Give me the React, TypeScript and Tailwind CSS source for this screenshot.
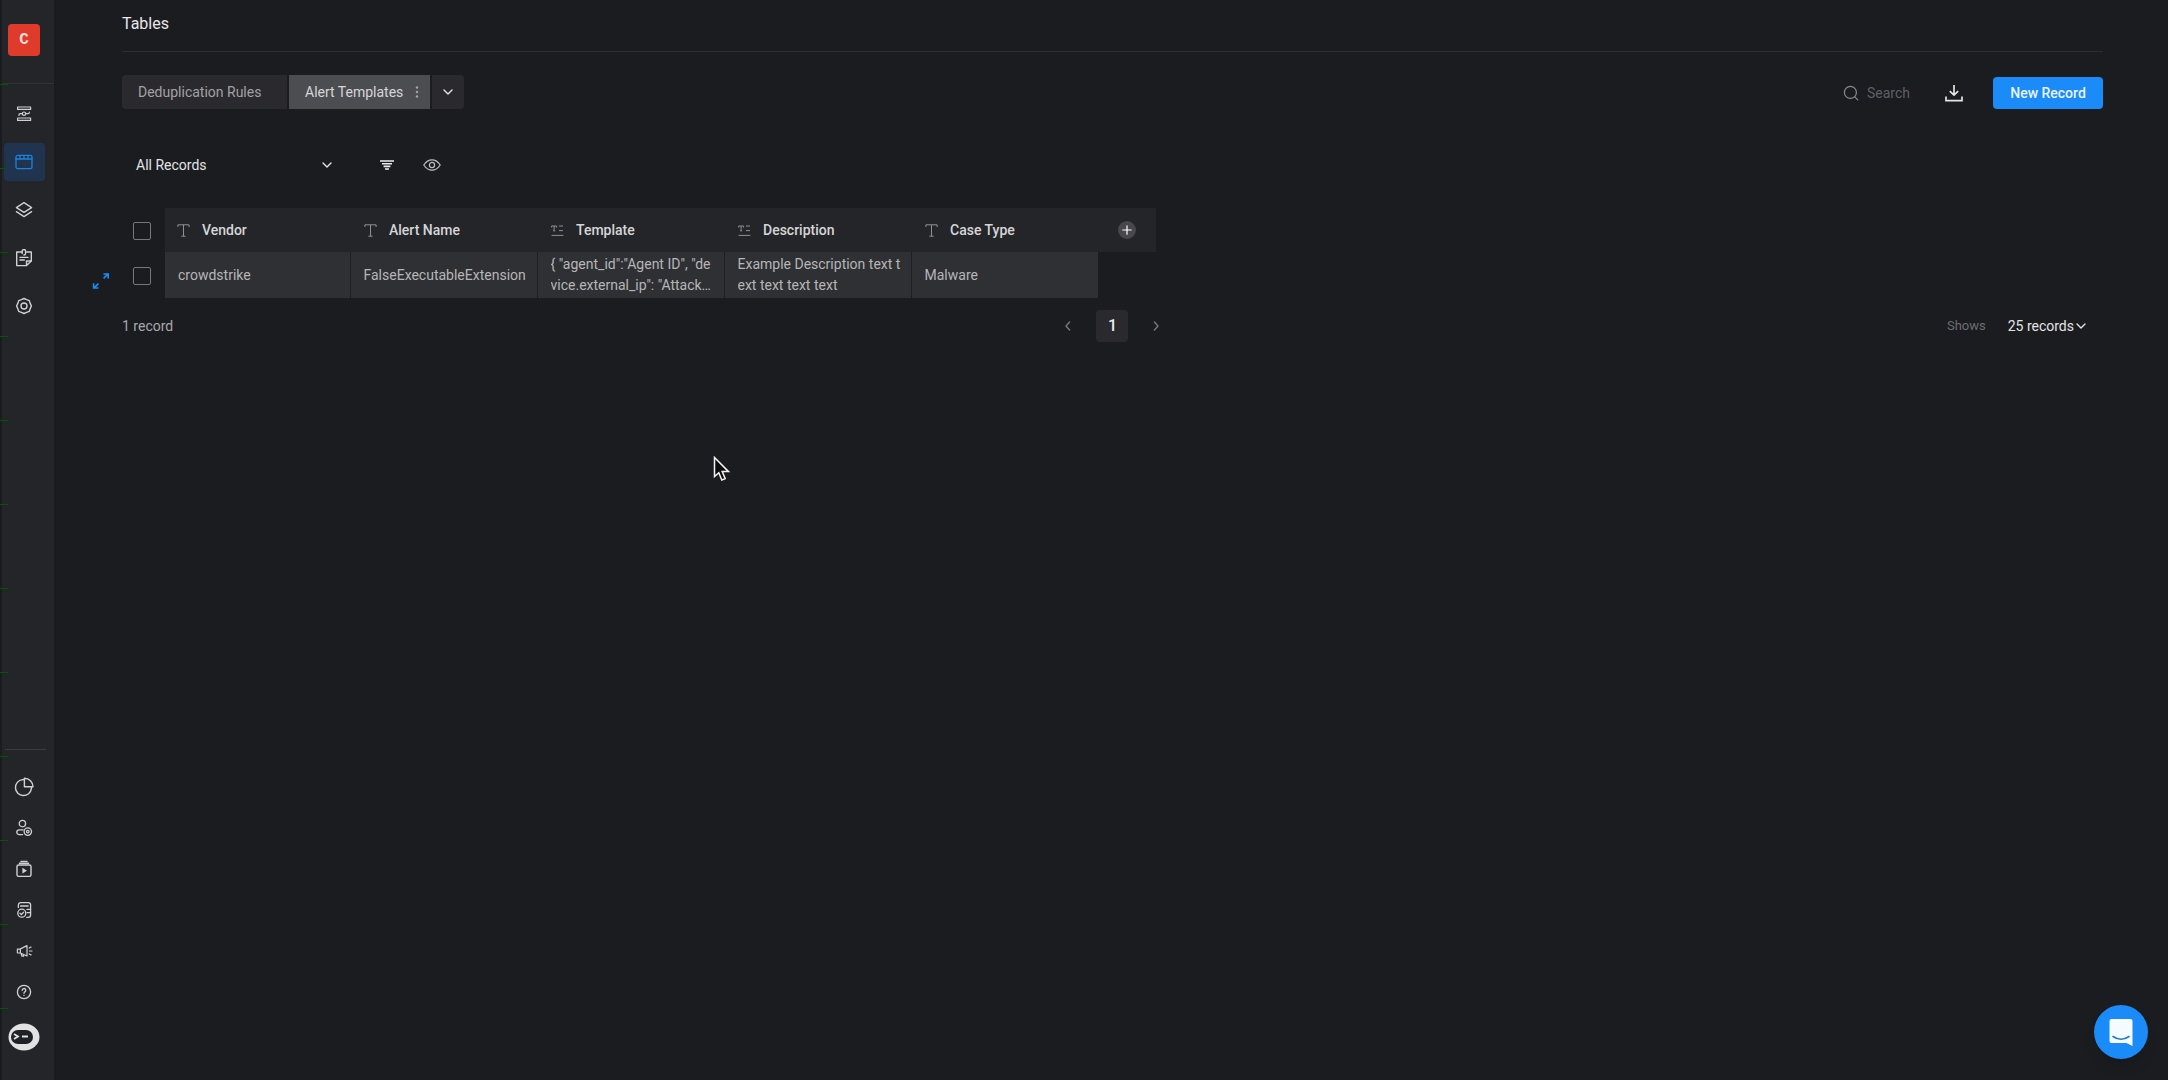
import type { ReactNode } from "react";

type IconProps = { size?: number; className?: string; children: ReactNode; box?: string; sw?: number };

function Icon({ size = 18, className = "", children, box = "0 0 18 18", sw = 1.3 }: IconProps) {
  return (
    <svg
      width={size}
      height={size}
      viewBox={box}
      fill="none"
      stroke="currentColor"
      strokeWidth={sw}
      strokeLinecap="round"
      strokeLinejoin="round"
      className={`shrink-0 ${className}`}
      aria-hidden="true"
    >
      {children}
    </svg>
  );
}

const FlowIcon = () => (
  <Icon sw={1.2}>
    <rect x="2.6" y="2" width="13" height="2.4" />
    <rect x="2.6" y="13" width="13" height="2.4" />
    <circle cx="9" cy="8.7" r="1.7" />
    <path d="M7.3 8.7H5.2q-1.2 0-1.2 1.2v.5M10.7 8.7h2.4q1.2 0 1.2-1.2V7" />
  </Icon>
);

const TablesIcon = () => (
  <Icon sw={1.3}>
    <rect x="1" y="2.4" width="16" height="13.2" rx="1.6" />
    <path d="M1 6h16M5 2.6V6M9 2.6V6M13 2.6V6" />
  </Icon>
);

const LayersIcon = () => (
  <Icon sw={1.3}>
    <path d="M9 1.6 16.6 6.6 9 11.4 1.4 6.6Z" />
    <path d="M1.4 10.6 9 15.6l7.6-5" />
  </Icon>
);

const NoteIcon = () => (
  <Icon sw={1.4}>
    <path d="M7 3H1.7v13.6h9.8l4.8-4.6V3h-4.6" />
    <path d="M11.5 16.4V12h4.6" />
    <path d="M7.2 4.6V2.2a1.7 1.7 0 0 1 3.4 0v2.4q0 1.4-1.7 1.4M5 8.4h8M5 11h4.4" />
  </Icon>
);

const GearIcon = () => (
  <Icon sw={1.4}>
    <path d="M6.4 2.7 9 1.5l2.6 1.2 2.7 1 .9 2.7L16.4 9l-1.2 2.6-.9 2.7-2.7 1L9 16.5l-2.6-1.2-2.7-1-.9-2.7L1.6 9l1.2-2.6.9-2.7Z" />
    <circle cx="9" cy="9" r="3" />
  </Icon>
);

const PieIcon = () => (
  <Icon size={20} box="0 0 20 20" sw={1.4}>
    <path d="M8.4 2.6a8 8 0 1 0 9 9" />
    <path d="M10.4 1.2v8.6h8.6a8.6 8.6 0 0 0-8.6-8.6Z" />
    <path d="M8.4 2.6q1-.2 2-.1M17.4 11.6q.2-1 .1-1.8" />
  </Icon>
);

const UserGearIcon = () => (
  <Icon sw={1.3}>
    <circle cx="7.4" cy="4.6" r="3.2" />
    <path d="M7.6 15.6H4.2a2.2 2.2 0 0 1 0-4.8h4" />
    <circle cx="12.8" cy="12.6" r="3.7" />
    <circle cx="12.8" cy="12.6" r="1.3" />
  </Icon>
);

const PlayBoxIcon = () => (
  <Icon sw={1.4}>
    <rect x="2" y="5" width="14" height="11.4" rx="1.6" />
    <path d="M4.4 3.2h9.2M6 1.4h6" />
    <path d="M7.4 7.8v5.8l4.6-2.9Z" fill="currentColor" stroke="none" />
  </Icon>
);

const DatabaseCheckIcon = () => (
  <Icon sw={1.3}>
    <path d="M3.4 6.4V4a2.4 2.4 0 0 1 2.4-2.4h7.4A2.4 2.4 0 0 1 15.6 4v10a2.4 2.4 0 0 1-2.4 2.4H11.8" />
    <path d="M5.6 5h7.6M12 8.4h3M12 11.6h3" />
    <circle cx="6.8" cy="12.2" r="4" />
    <path d="m5 12.2 1.4 1.3 2.3-2.4" />
  </Icon>
);

const MegaphoneIcon = () => (
  <Icon sw={1.2}>
    <path d="M2.4 7.2v3.6l3 .2 6.6 3V3.6L5.4 6.9ZM5.4 7v4M6 11.4l.8 2.8h1.8l-.6-2" />
    <path d="M14.4 9h2.6M14.2 6l1.8-.9M14.2 12l1.8.9" />
  </Icon>
);

const HelpIcon = () => (
  <Icon size={18} sw={1.3}>
    <circle cx="9" cy="9" r="6.6" />
    <path d="M7.2 7.4a1.8 1.8 0 1 1 2.6 1.5q-.8.5-.8 1.4" />
    <path d="M9 12.3v.1" />
  </Icon>
);

const ChevronDown = ({ className = "" }: { className?: string }) => (
  <Icon size={12} box="0 0 12 12" sw={1.4} className={className}>
    <path d="m2 4 4 4 4-4" />
  </Icon>
);

const TextTypeIcon = () => (
  <svg width="13" height="13" viewBox="0 0 13 13" fill="none" stroke="#8f9093" className="shrink-0" aria-hidden="true">
    <path d="M.9 3V.8h11.2V3M6.5.8v11.4M4.4 12.2h4.2" />
  </svg>
);

const LongTextIcon = () => (
  <svg width="13" height="13" viewBox="0 0 13 13" fill="none" stroke="#8f9093" className="shrink-0" aria-hidden="true">
    <path d="M.6 3.5V2h5v1.5M3.1 2v4.6M2 6.8h2.2M8 2h4M8 6.6h4M.6 11.4h11.8" />
  </svg>
);

const mainNav = [
  { label: "Workflows", icon: <FlowIcon /> },
  { label: "Tables", icon: <TablesIcon />, active: true },
  { label: "Integrations", icon: <LayersIcon /> },
  { label: "Cases", icon: <NoteIcon /> },
  { label: "Settings", icon: <GearIcon /> },
];

const bottomNav = [
  { label: "Reports", icon: <PieIcon /> },
  { label: "Users", icon: <UserGearIcon /> },
  { label: "Runs", icon: <PlayBoxIcon /> },
  { label: "Audit", icon: <DatabaseCheckIcon /> },
  { label: "Announcements", icon: <MegaphoneIcon /> },
  { label: "Help", icon: <HelpIcon /> },
];

const greenTicks = [84, 168, 252, 336, 420, 504, 588, 672, 756, 840, 924, 1008];

function Sidebar() {
  return (
    <aside className="relative flex w-[54px] shrink-0 flex-col border-l-2 border-[#1b1c20] bg-[#242529] text-[#d0d1d3]">
      <div className="h-[84px] border-b border-[#313236] pt-6 pl-1.5">
        <button
          type="button"
          aria-label="Workspace C"
          className="flex size-8 items-center justify-center rounded-sm bg-[#df3a2a] font-mono text-base font-bold text-[#f3dcd8]"
        >
          C
        </button>
      </div>
      <nav aria-label="Main" className="flex flex-col gap-2.5 pt-[11px] pl-0.5">
        {mainNav.map((item) => (
          <button
            key={item.label}
            type="button"
            aria-label={item.label}
            className={
              item.active
                ? "flex h-[38px] w-[41px] items-center justify-center rounded bg-[#20344f] pr-px text-[#1c80dc]"
                : "flex h-[38px] w-[41px] items-center justify-center rounded pr-px"
            }
          >
            {item.icon}
          </button>
        ))}
      </nav>
      <div className="mt-auto mr-2 ml-[3px] border-t border-[#3a3b3f]" />
      <nav aria-label="Secondary" className="flex flex-col pt-4 pl-0.5">
        {bottomNav.map((item) => (
          <button key={item.label} type="button" aria-label={item.label} className="flex h-[41px] w-10 items-center justify-center">
            {item.icon}
          </button>
        ))}
      </nav>
      <button type="button" aria-label="Account" className="mt-[11px] mb-[29px] ml-1.5 w-8">
        <svg width="32" height="28" viewBox="0 0 32 28" aria-hidden="true">
          <ellipse cx="16" cy="14" rx="15.5" ry="13.5" fill="#e2e2e4" />
          <rect x="3" y="7" width="22" height="14" rx="7" fill="#202125" />
          <path d="m6 11 4 2.5-4 2.5M14 13.5h6" fill="none" stroke="#e2e2e4" strokeWidth="1.8" />
        </svg>
      </button>
      <svg className="pointer-events-none absolute top-0 -left-0.5" width="8" height="1080" aria-hidden="true">
        {greenTicks.map((y) => (
          <rect key={y} x="0" y={y} width="8" height="1" fill="#075407" />
        ))}
      </svg>
    </aside>
  );
}

const columns = [
  { name: "Vendor", long: false },
  { name: "Alert Name", long: false },
  { name: "Template", long: true },
  { name: "Description", long: true },
  { name: "Case Type", long: false },
];

const row = [
  "crowdstrike",
  "FalseExecutableExtension",
  '{ "agent_id":"Agent ID", "device.external_ip": "Attack…',
  "Example Description text text text text text",
  "Malware",
];

const checkboxClass = "block size-[18px] appearance-none rounded-xs border border-[#77787b] checked:bg-[#1a8bf8]";

function RecordsTable() {
  return (
    <table className="-ml-8 table-fixed border-collapse text-left text-sm">
      <colgroup>
        <col className="w-8" />
        <col className="w-[43px]" />
        {columns.map((c, i) => (
          <col key={c.name} className={i === 0 ? "w-[185px]" : "w-[187px]"} />
        ))}
        <col className="w-[58px]" />
      </colgroup>
      <thead>
        <tr className="h-11">
          <td />
          <td className="pt-0.5 pl-[11px]">
            <input type="checkbox" aria-label="Select all records" className={checkboxClass} />
          </td>
          {columns.map((c, i) => (
            <th
              key={c.name}
              scope="col"
              className={i === 0 ? "bg-[#242528] pl-3 font-medium text-[#d6d6d8]" : "bg-[#242528] pl-3.5 font-medium text-[#d6d6d8]"}
            >
              <span className="flex items-center gap-3">
                {c.long ? <LongTextIcon /> : <TextTypeIcon />}
                {c.name}
              </span>
            </th>
          ))}
          <td className="bg-[#242528] pl-5">
            <button type="button" aria-label="Add column" className="flex size-[18px] items-center justify-center rounded-full bg-[#48484c] text-white">
              <Icon size={10} box="0 0 10 10" sw={1.2}>
                <path d="M5 .8v8.4M.8 5h8.4" />
              </Icon>
            </button>
          </td>
        </tr>
      </thead>
      <tbody>
        <tr className="h-[46px]">
          <td className="pt-3 pl-0.5">
            <button type="button" aria-label="Expand record" className="block text-[#1a8bf8]">
              <Icon size={18} sw={1.6}>
                <path d="m11.6 6.4 4-4M11.4 2h4.8v4.6M6.4 11.6l-4 4M1.6 11.2V16h4.8" strokeLinecap="butt" strokeLinejoin="miter" />
              </Icon>
            </button>
          </td>
          <td className="pt-0.5 pl-[11px]">
            <input type="checkbox" aria-label="Select crowdstrike record" className={checkboxClass} />
          </td>
          {row.map((value) => (
            <td key={value} className="border-r border-[#1e1f22] bg-[#2f3033] pr-2 pl-[13px] text-[#b6b6b8] last:border-r-0">
              <span className="line-clamp-2 leading-[21px] break-all">{value}</span>
            </td>
          ))}
        </tr>
      </tbody>
    </table>
  );
}

export default function App() {
  return (
    <div className="flex min-h-screen bg-[#1b1c20] font-[Roboto,sans-serif] text-sm text-[#e4e4e6]">
      <Sidebar />
      <main className="min-w-0 flex-1 pr-[65px] pl-[68px]">
        <header className="flex h-[52px] items-start border-b border-[#2d2e32] pt-3">
          <h1 className="text-base leading-6 font-normal text-[#e8e8ea]">Tables</h1>
        </header>

        <div className="mt-[23px] flex items-center justify-between">
          <div className="flex h-[34px] gap-0.5">
            <button type="button" className="w-[165px] rounded-l bg-[#2a292d] pl-4 text-left text-[#a2a2a5]">
              Deduplication Rules
            </button>
            <div className="flex items-center bg-[#4c4d51] pl-4">
              <button type="button" className="text-[#d6d6d8]">Alert Templates</button>
              <button type="button" aria-label="Table options" className="flex h-full w-[27px] items-center justify-center text-[#a2a2a5]">
                <svg width="4" height="12" fill="currentColor" aria-hidden="true">
                  <circle cx="2" cy="1.5" r="1.2" />
                  <circle cx="2" cy="6" r="1.2" />
                  <circle cx="2" cy="10.5" r="1.2" />
                </svg>
              </button>
            </div>
            <button type="button" aria-label="More tables" className="flex w-8 items-center justify-center rounded-r bg-[#2a292d] text-[#e4e4e6]">
              <ChevronDown />
            </button>
          </div>

          <div className="flex items-center pt-0.5">
            <label className="flex items-center gap-2 text-[#88898c]">
              <Icon size={16} box="0 0 16 16" sw={1.2}>
                <circle cx="7.4" cy="7.4" r="6" />
                <path d="m11.8 11.8 3 3" />
              </Icon>
              <input type="text" placeholder="Search" aria-label="Search" className="w-[78px] bg-transparent outline-none placeholder:text-[#5f6063]" />
            </label>
            <button type="button" aria-label="Download" className="mr-[30px]">
              <Icon size={18} sw={1.7}>
                <path d="M9 1v10M4.8 7.2 9 11.2l4.2-4M1 12.4v4.2h16v-4.2" strokeLinecap="butt" strokeLinejoin="miter" />
              </Icon>
            </button>
            <button type="button" className="h-8 w-[110px] rounded bg-[#1a8bf8] font-medium text-[#ecf5ff]">
              New Record
            </button>
          </div>
        </div>

        <div className="mt-10 flex h-8 items-center">
          <button type="button" className="flex w-[211px] items-center justify-between pl-3.5">
            <span>All Records</span>
            <ChevronDown />
          </button>
          <button type="button" aria-label="Filter records" className="ml-[47px] text-[#ececee]">
            <svg width="14" height="10" viewBox="0 0 14 10" fill="none" stroke="currentColor" strokeWidth="1.6" aria-hidden="true">
              <path d="M0 1h14M2 3.7h10M3.6 6.4h6.8M5 9h4" />
            </svg>
          </button>
          <button type="button" aria-label="Visible fields" className="ml-[29px] text-[#bebec1]">
            <svg width="18" height="12" viewBox="0 0 18 12" fill="none" stroke="currentColor" strokeWidth="1.2" aria-hidden="true">
              <path d="M.8 6Q4.2.8 9 .8T17.2 6Q13.8 11.2 9 11.2T.8 6Z" />
              <circle cx="9" cy="6" r="2.6" />
            </svg>
          </button>
        </div>

        <section aria-label="Records" className="mt-[27px]">
          <RecordsTable />
          <footer className="mt-3 grid grid-cols-3 items-center">
            <span className="text-[#a9a9ac]">1 record</span>
            <div className="flex items-center justify-center gap-[22px] text-[#77787b]">
              <button type="button" aria-label="Previous page">
                <Icon size={12} box="0 0 12 12" sw={1.4}>
                  <path d="M7.6 2 4 6l3.6 4" />
                </Icon>
              </button>
              <button type="button" aria-current="page" className="size-8 rounded bg-[#2a292d] text-base font-medium text-[#ececee]">
                1
              </button>
              <button type="button" aria-label="Next page">
                <Icon size={12} box="0 0 12 12" sw={1.4}>
                  <path d="M4.4 2 8 6l-3.6 4" />
                </Icon>
              </button>
            </div>
            <div className="flex items-center justify-end gap-[22px] pr-4">
              <span className="text-[13px] text-[#6c6d70]">Shows</span>
              <button type="button" className="flex items-center gap-px">
                25 records
                <ChevronDown />
              </button>
            </div>
          </footer>
        </section>
      </main>

      <button type="button" aria-label="Open chat" className="fixed right-5 bottom-[21px] flex size-[54px] items-center justify-center rounded-full bg-[#1a8bf8] shadow-lg">
        <svg width="26" height="28" viewBox="0 0 26 28" aria-hidden="true">
          <path d="M3.5 1h19q2 0 2 2v25l-6-3h-15q-2 0-2-2V3q0-2 2-2Z" fill="#f6fbff" />
          <path d="M5 18.5q8 5.5 16 0" fill="none" stroke="#1a7bd0" strokeWidth="1.6" strokeLinecap="round" />
        </svg>
      </button>

      <svg className="pointer-events-none fixed top-[456px] left-[713px]" width="18" height="26" viewBox="0 0 18 26" aria-hidden="true">
        <path d="M1.5 1.5v19l4.3-3.8 3 7.3 3.4-1.4-3-7H15.5Z" fill="#0c0c0e" stroke="#f2f2f2" strokeWidth="1.5" />
      </svg>
    </div>
  );
}
